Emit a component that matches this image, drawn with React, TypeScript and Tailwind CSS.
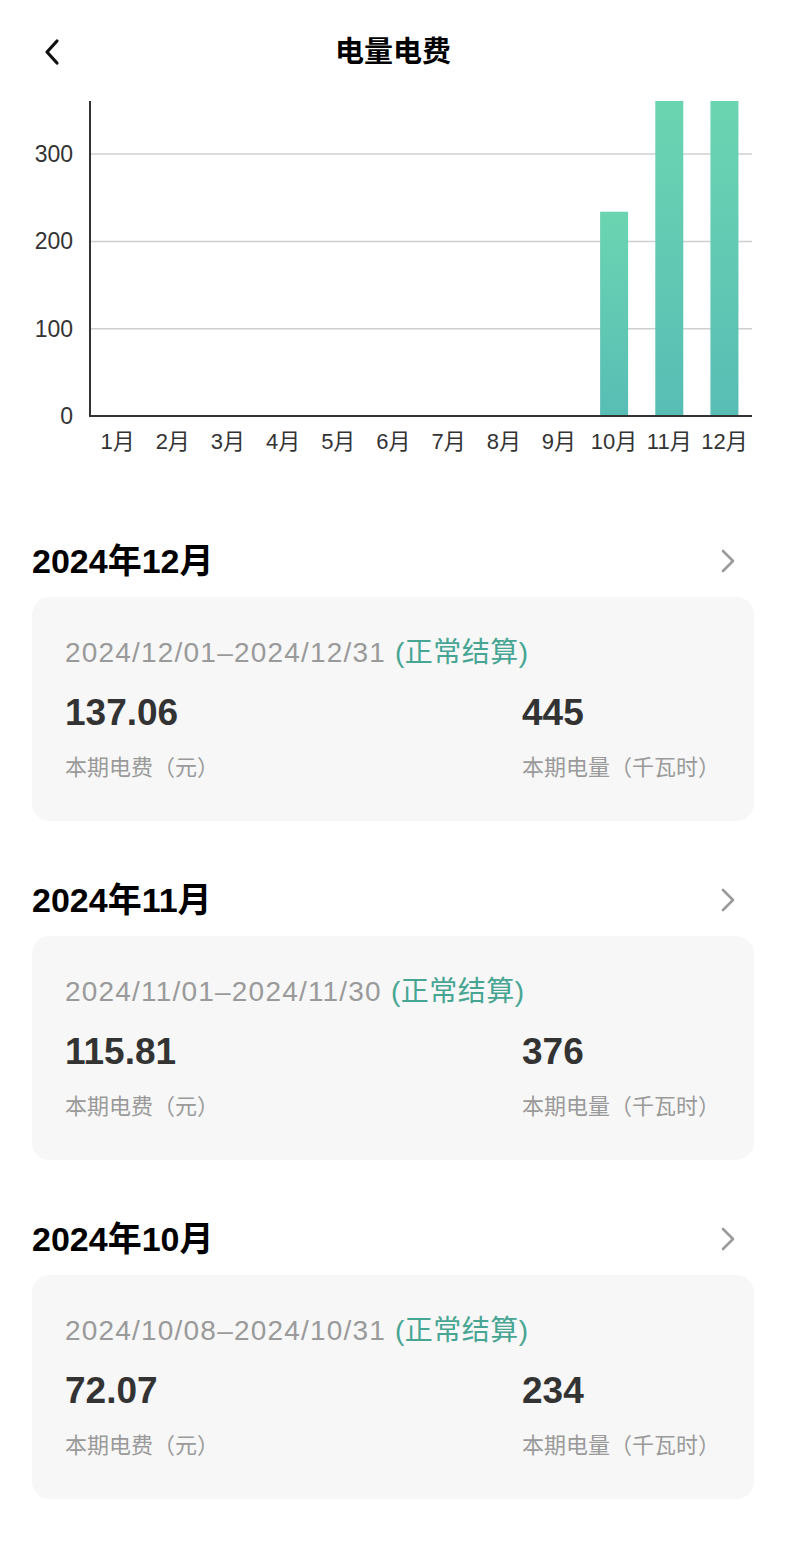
const FONT = { fontFamily: '"Liberation Sans", "Noto Sans CJK SC", sans-serif' };

const months = ["1月", "2月", "3月", "4月", "5月", "6月", "7月", "8月", "9月", "10月", "11月", "12月"];
const usage = [0, 0, 0, 0, 0, 0, 0, 0, 0, 234, 376, 445];

const bills = [
  { title: "2024年12月", range: "2024/12/01–2024/12/31", fee: "137.06", kwh: "445" },
  { title: "2024年11月", range: "2024/11/01–2024/11/30", fee: "115.81", kwh: "376" },
  { title: "2024年10月", range: "2024/10/08–2024/10/31", fee: "72.07", kwh: "234" },
];

function Chart() {
  // svg top sits at page y=96
  const base = 320;
  const perUnit = 0.873;
  const top = 5;
  const step = 55.17;
  return (
    <svg width="786" height="374" className="block" style={FONT}>
      <defs>
        <linearGradient id="bar" x1="0" y1="0" x2="0" y2="1">
          <stop offset="0" stopColor="#6bd5b1" />
          <stop offset="1" stopColor="#58bdb5" />
        </linearGradient>
      </defs>
      {[100, 200, 300].map((v) => (
        <line key={v} x1="90" x2="752" y1={base - v * perUnit} y2={base - v * perUnit} stroke="#cfcfcf" strokeWidth="1.5" />
      ))}
      {[0, 100, 200, 300].map((v) => (
        <text key={v} x="73" y={base - v * perUnit + 8} textAnchor="end" fontSize="23" fill="#333">
          {v}
        </text>
      ))}
      {usage.map((u, i) => {
        if (!u) return null;
        const cx = 90 + step * (i + 0.5);
        const y = Math.max(top, base - u * perUnit);
        return <rect key={i} x={cx - 14} y={y} width="28" height={base - y} fill="url(#bar)" />;
      })}
      <line x1="90" x2="90" y1={top} y2={base + 1} stroke="#333" strokeWidth="2" />
      <line x1="89" x2="752" y1={base} y2={base} stroke="#333" strokeWidth="2" />
      {months.map((m, i) => (
        <text key={m} x={90 + step * (i + 0.5)} y="353" textAnchor="middle" fontSize="22" fill="#333">
          {m}
        </text>
      ))}
    </svg>
  );
}

function ChevronRight() {
  return (
    <svg width="16" height="26" viewBox="0 0 16 26" fill="none">
      <path d="M3 3l10 10-10 10" stroke="#9a9a9a" strokeWidth="2.6" strokeLinecap="round" strokeLinejoin="round" />
    </svg>
  );
}

function BillSection({ bill }: { bill: (typeof bills)[number] }) {
  return (
    <section className="px-8">
      <div className="flex h-10 items-center justify-between">
        <h2 className="text-[34px] font-bold leading-10 text-black">{bill.title}</h2>
        <div className="mr-[18px]">
          <ChevronRight />
        </div>
      </div>
      <div className="mt-4 h-[224px] rounded-[18px] bg-[#f7f7f7] px-[33px] pt-[38px]">
        <p className="text-[28px] leading-9 tracking-[1.2px] text-[#9a9a9a]">
          {bill.range} <span className="tracking-[0.5px] text-[#47a593]">(正常结算)</span>
        </p>
        <div className="mt-5 grid grid-cols-[457px_1fr]">
          <div>
            <div className="text-[37px] font-semibold leading-[44px] text-[#333]">{bill.fee}</div>
            <div className="mt-[18px] text-[22px] leading-[30px] text-[#9a9a9a]">本期电费（元）</div>
          </div>
          <div>
            <div className="text-[37px] font-semibold leading-[44px] text-[#333]">{bill.kwh}</div>
            <div className="mt-[18px] text-[22px] leading-[30px] text-[#9a9a9a]">本期电量（千瓦时）</div>
          </div>
        </div>
      </div>
    </section>
  );
}

export default function App() {
  return (
    <div className="min-h-[1555px] w-[786px] bg-white" style={FONT}>
      <header className="relative flex h-24 items-start justify-center pt-[34px]">
        <button className="absolute left-[40px] top-[38px]">
          <svg width="24" height="28" viewBox="0 0 24 28" fill="none">
            <path d="M17 3L7 14l10 11" stroke="#111" strokeWidth="3.2" strokeLinecap="round" strokeLinejoin="round" />
          </svg>
        </button>
        <h1 className="text-[29px] font-bold leading-9 text-black">电量电费</h1>
      </header>

      <Chart />

      <div className="mt-[71px] flex flex-col gap-[59px] pb-14">
        {bills.map((b) => (
          <BillSection key={b.title} bill={b} />
        ))}
      </div>
    </div>
  );
}
